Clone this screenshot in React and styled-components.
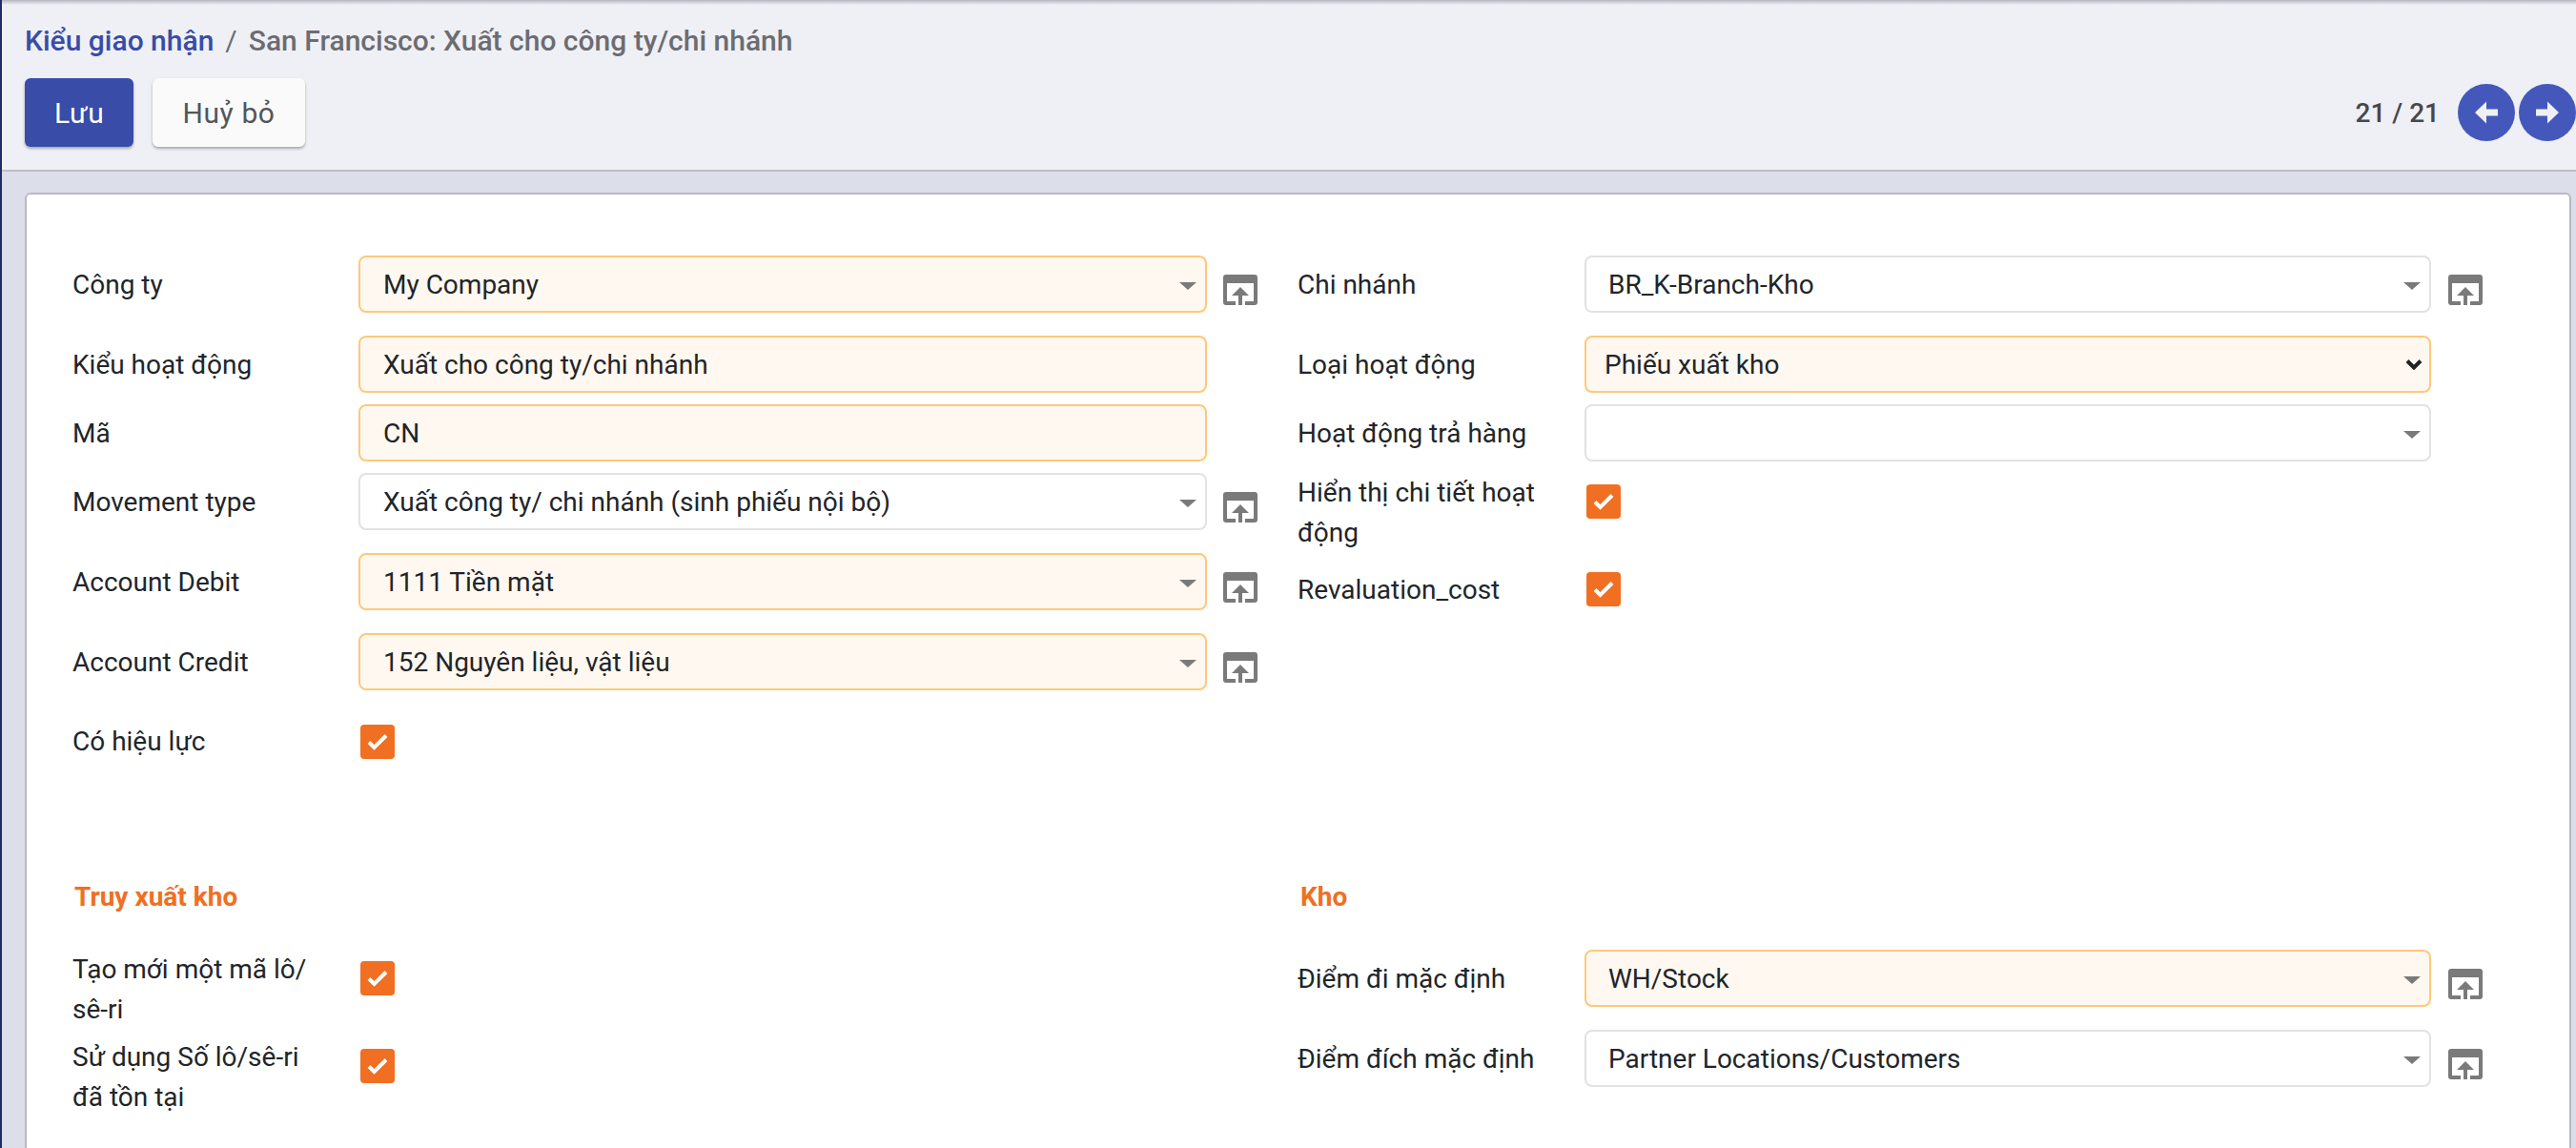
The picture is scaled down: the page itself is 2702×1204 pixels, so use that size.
import styled, { createGlobalStyle } from 'styled-components'

const GlobalStyle = createGlobalStyle`
  html, body {
    margin: 0;
    padding: 0;
    height: 100%;
    overflow: hidden;
    background: #dcdeea;
    font-family: Roboto, "Liberation Sans", sans-serif;
  }
  * {
    box-sizing: border-box;
  }
`

const colors = {
  primary: '#384ca8',
  pager: '#4458bc',
  orange: '#f06f22',
  text: '#212529',
}

const Page = styled.div`
  height: 1204px;
  border-left: 2px solid #1f2a66;
  overflow: hidden;
`

const Header = styled.div`
  height: 180px;
  padding: 27px 0 0 24px;
  background: linear-gradient(#b4b6bf 0, #eff0f5 5px);
  border-bottom: 2px solid #bfbfc9;
`

const Breadcrumb = styled.div`
  font-size: 30px;
  line-height: 32px;
  font-weight: 500;
  color: #6c6c72;
`

const Crumb = styled.span`
  color: ${colors.primary};
`

const Slash = styled.span`
  margin: 0 12px;
  font-weight: 400;
`

const Toolbar = styled.div`
  display: flex;
  justify-content: space-between;
  align-items: center;
  margin-top: 23px;
`

const Buttons = styled.div`
  display: flex;
  gap: 20px;
`

const Button = styled.button`
  height: 72px;
  padding: 0 31px;
  border: none;
  border-radius: 6px;
  font-family: inherit;
  font-size: 30px;
  letter-spacing: 0.6px;
  color: ${(p) => (p.$primary ? '#fff' : '#55555a')};
  background: ${(p) => (p.$primary ? colors.primary : '#fafafa')};
  box-shadow: 0 2px 3px rgba(0, 0, 0, 0.3);
`

const Pager = styled.div`
  display: flex;
  align-items: center;
  gap: 4px;
`

const PagerText = styled.div`
  margin-right: 15px;
  font-size: 28px;
  font-weight: 500;
  color: #47474c;
`

const PagerButton = styled.div`
  width: 60px;
  height: 60px;
  display: grid;
  place-content: center;
  border-radius: 50%;
  background: ${colors.pager};
`

const Card = styled.div`
  margin: 22px 5px 0 24px;
  padding: 64px 0 0 48px;
  height: 1100px;
  background: #fff;
  border: 2px solid #b9b9c0;
  border-radius: 6px;
`

const Columns = styled.div`
  display: grid;
  grid-template-columns: 1285px 1fr;
`

const Row = styled.div`
  display: flex;
  align-items: flex-start;
  height: ${(p) => p.$h}px;
`

const Label = styled.div`
  flex: none;
  width: ${(p) => p.$w || 300}px;
  padding-top: ${(p) => (p.$top === undefined ? 10 : p.$top)}px;
  padding-right: 30px;
  font-size: 28px;
  line-height: 42px;
  color: ${colors.text};
`

const Field = styled.div`
  position: relative;
  width: ${(p) => p.$w}px;
  height: 60px;
  padding-left: ${(p) => p.$pad || 24}px;
  display: flex;
  align-items: center;
  font-size: 28px;
  color: ${colors.text};
  background: ${(p) => (p.$required ? '#fff8f0' : '#fff')};
  border: 2px solid ${(p) => (p.$required ? '#ffc87a' : '#e2e2e2')};
  border-radius: 8px;
`

const Caret = styled.div`
  position: absolute;
  right: 9px;
  top: 26px;
  width: 0;
  height: 0;
  border-left: 9px solid transparent;
  border-right: 9px solid transparent;
  border-top: 8px solid #7a7a7a;
`

const Chevron = styled.svg`
  position: absolute;
  right: 7px;
  top: 22px;
`

const External = styled.svg`
  flex: none;
  margin: 20px 0 0 ${(p) => p.$gap}px;
`

const Check = styled.div`
  width: 36px;
  height: 36px;
  margin-top: ${(p) => p.$top}px;
  margin-left: ${(p) => p.$left || 2}px;
  display: grid;
  place-content: center;
  border-radius: 4px;
  background: ${colors.orange};
`

const SectionColumns = styled(Columns)`
  margin-top: 64px;
`

const SectionTitle = styled.div`
  height: 72px;
  margin-left: ${(p) => p.$left || 2}px;
  font-size: 28px;
  line-height: 34px;
  font-weight: 700;
  color: ${colors.orange};
`

const ArrowIcon = ({ flip }) => (
  <svg width="24" height="24" viewBox="0 0 24 24" style={flip ? { transform: 'scaleX(-1)' } : undefined}>
    <path d="M0 12 12 .5v8h12v7H12v8z" fill="#eff0f5" />
  </svg>
)

const ExternalIcon = ({ gap }) => (
  <External $gap={gap} width="36" height="32" viewBox="0 0 36 32">
    <path
      d="M3 0h30a3 3 0 0 1 3 3v26a3 3 0 0 1-3 3H23v-4h9V9H4v19h9v4H3a3 3 0 0 1-3-3V3a3 3 0 0 1 3-3z"
      fill="#7a7a7a"
    />
    <path d="M18 13l9 9h-7v10h-4V22H9z" fill="#7a7a7a" />
  </External>
)

const CheckBox = ({ top, left }) => (
  <Check $top={top} $left={left}>
    <svg width="22" height="18" viewBox="0 0 22 18">
      <path d="M2 9.5l5.5 5.5L20 2.5" fill="none" stroke="#fff" strokeWidth="4" />
    </svg>
  </Check>
)

const Select = ({ w, required, value, pad }) => (
  <Field $w={w} $required={required} $pad={pad}>
    {value}
    <Caret />
  </Field>
)

const Index = () => {
  return (
    <Page>
      <GlobalStyle />
      <Header>
        <Breadcrumb>
          <Crumb>Kiểu giao nhận</Crumb>
          <Slash>/</Slash>
          San Francisco: Xuất cho công ty/chi nhánh
        </Breadcrumb>
        <Toolbar>
          <Buttons>
            <Button $primary>Lưu</Button>
            <Button>Huỷ bỏ</Button>
          </Buttons>
          <Pager>
            <PagerText>21 / 21</PagerText>
            <PagerButton><ArrowIcon /></PagerButton>
            <PagerButton><ArrowIcon flip /></PagerButton>
          </Pager>
        </Toolbar>
      </Header>
      <Card>
        <Columns>
          <div>
            <Row $h={84}>
              <Label>Công ty</Label>
              <Select w={890} required value="My Company" />
              <ExternalIcon gap={17} />
            </Row>
            <Row $h={72}>
              <Label>Kiểu hoạt động</Label>
              <Field $w={890} $required>Xuất cho công ty/chi nhánh</Field>
            </Row>
            <Row $h={72}>
              <Label>Mã</Label>
              <Field $w={890} $required>CN</Field>
            </Row>
            <Row $h={84}>
              <Label>Movement type</Label>
              <Select w={890} value="Xuất công ty/ chi nhánh (sinh phiếu nội bộ)" />
              <ExternalIcon gap={17} />
            </Row>
            <Row $h={84}>
              <Label>Account Debit</Label>
              <Select w={890} required value="1111 Tiền mặt" />
              <ExternalIcon gap={17} />
            </Row>
            <Row $h={93}>
              <Label>Account Credit</Label>
              <Select w={890} required value="152 Nguyên liệu, vật liệu" />
              <ExternalIcon gap={17} />
            </Row>
            <Row $h={103}>
              <Label $top={0}>Có hiệu lực</Label>
              <CheckBox top={3} />
            </Row>
          </div>
          <div>
            <Row $h={84}>
              <Label $w={301}>Chi nhánh</Label>
              <Select w={888} pad={23} value="BR_K-Branch-Kho" />
              <ExternalIcon gap={18} />
            </Row>
            <Row $h={72}>
              <Label $w={301}>Loại hoạt động</Label>
              <Field $w={888} $required $pad={19}>
                Phiếu xuất kho
                <Chevron width="18" height="12" viewBox="0 0 18 12">
                  <path d="M2 2.5l7 7 7-7" fill="none" stroke="#222" strokeWidth="4" />
                </Chevron>
              </Field>
            </Row>
            <Row $h={72}>
              <Label $w={301}>Hoạt động trả hàng</Label>
              <Select w={888} />
            </Row>
            <Row $h={92}>
              <Label $w={301} $top={0}>Hiển thị chi tiết hoạt động</Label>
              <CheckBox top={12} />
            </Row>
            <Row $h={60}>
              <Label $w={301}>Revaluation_cost</Label>
              <CheckBox top={12} />
            </Row>
          </div>
        </Columns>
        <SectionColumns>
          <SectionTitle>Truy xuất kho</SectionTitle>
          <SectionTitle $left={3}>Kho</SectionTitle>
        </SectionColumns>
        <Columns>
          <div>
            <Row $h={92}>
              <Label $top={0}>Tạo mới một mã lô/ sê-ri</Label>
              <CheckBox top={12} />
            </Row>
            <Row $h={92}>
              <Label $top={0}>Sử dụng Số lô/sê-ri đã tồn tại</Label>
              <CheckBox top={12} />
            </Row>
          </div>
          <div>
            <Row $h={84}>
              <Label $w={301}>Điểm đi mặc định</Label>
              <Select w={888} pad={23} required value="WH/Stock" />
              <ExternalIcon gap={18} />
            </Row>
            <Row $h={84}>
              <Label $w={301}>Điểm đích mặc định</Label>
              <Select w={888} pad={23} value="Partner Locations/Customers" />
              <ExternalIcon gap={18} />
            </Row>
          </div>
        </Columns>
      </Card>
    </Page>
  )
}

export default Index
